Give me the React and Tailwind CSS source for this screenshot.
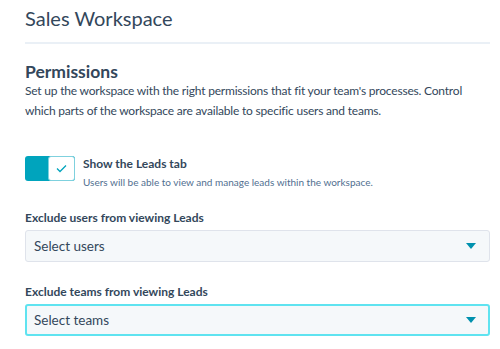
import React, { useState } from "react";

export default function App() {
  const [showLeads, setShowLeads] = useState(true);

  return (
    <div className="w-[500px] h-[349px] bg-white pl-[25px] pr-[10px] overflow-hidden text-[#33475b]" style={{ fontFamily: 'Lato, sans-serif' }}>
      <h1 className="text-[20px] leading-[26px] pt-[5px] font-normal">Sales Workspace</h1>
      <div className="mt-[11px] h-[2px] bg-[#eaf0f6]" />

      <h2 className="mt-[18px] text-[17.5px] leading-[20px] font-bold">Permissions</h2>
      <p className="text-[12px] leading-[20px] tracking-[-0.2px] mt-[-1px]">
        Set up the workspace with the right permissions that fit your team's processes. Control which parts of the workspace are available to specific users and teams.
      </p>

      {/* Toggle */}
      <div className="flex mt-[35px] gap-[8px]">
        <button
          onClick={() => setShowLeads(!showLeads)}
          className="w-[50px] h-[25px] rounded-[3px] bg-[#00a4bd] flex justify-end shrink-0"
        >
          <span className="w-[27px] h-[25px] bg-white border border-[#7fd1de] rounded-[3px] flex items-center justify-center">
            <svg width="11" height="9" viewBox="0 0 11 9" fill="none">
              <path d="M1 4.5 L4 7.5 L10 1.5" stroke="#00a4bd" strokeWidth="1.3" />
            </svg>
          </span>
        </button>
        <div>
          <div className="text-[12px] leading-[16px] font-bold">Show the Leads tab</div>
          <div className="text-[10px] leading-[14px] mt-[3px] text-[#516f90]">
            Users will be able to view and manage leads within the workspace.
          </div>
        </div>
      </div>

      <label className="block mt-[21px] text-[12px] leading-[16px] font-bold">Exclude users from viewing Leads</label>
      <div className="mt-[4px] h-[32px] bg-[#f5f8fa] border border-[#dfe3eb] rounded-[3px] flex items-center justify-between pl-[8px] pr-[13px]">
        <span className="text-[13.5px]">Select users</span>
        <svg width="10" height="6" viewBox="0 0 10 6">
          <path d="M0 0 H10 L5 6 Z" fill="#0091ae" />
        </svg>
      </div>

      <label className="block mt-[22px] text-[12px] leading-[16px] font-bold">Exclude teams from viewing Leads</label>
      <div className="mt-[4px] h-[32px] bg-[#f5f8fa] border-2 border-[#5fe3f0] rounded-[3px] flex items-center justify-between pl-[7px] pr-[12px]">
        <span className="text-[13.5px]">Select teams</span>
        <svg width="10" height="6" viewBox="0 0 10 6">
          <path d="M0 0 H10 L5 6 Z" fill="#0091ae" />
        </svg>
      </div>
    </div>
  );
}
